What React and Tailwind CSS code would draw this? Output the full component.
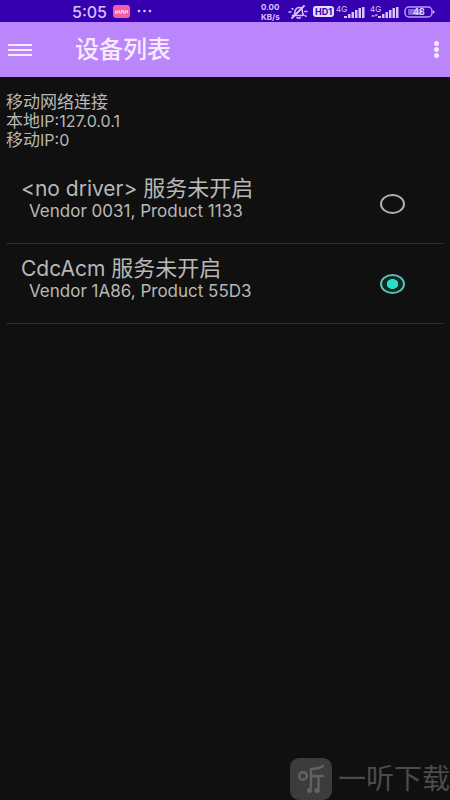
import React from "react";

const devices = [
  { id: "none", name: "<no driver>", status: "服务未开启", detail: "Vendor 0031, Product 1133" },
  { id: "cdc", name: "CdcAcm", status: "服务未开启", detail: "Vendor 1A86, Product 55D3" },
];

function MutedBell() {
  return (
    <svg viewBox="0 0 20 14" className="h-[14px] w-5" fill="none" stroke="currentColor" strokeWidth="1.5" strokeLinecap="round">
      <path d="M4.5 10.5h10M6 10c1-1 .6-2.500 1.300-4.500C8 3.500 9.500 2.500 11 2.500c2 0 3.300 1.300 3.300 3.200 0 2 .4 3.300 1.400 4.300" />
      <path d="M4 13 16 1" strokeWidth="1.8" />
      <path d="M9 12.600c1 .7 2.400.7 3.400 0M1 7h2M16.800 6.500h2.200M4 3.500l1 .8M17 10.500l1 .8" />
    </svg>
  );
}

function Signal({ sub }) {
  return (
    <svg viewBox="0 0 29 14" className="h-[14px] w-[29px]" fill="currentColor">
      <text x="0" y="7" fontSize="8" fontFamily="Inter, sans-serif">4G</text>
      {sub && <path d="M1 11.500 3 9.500v1h2v1zM8 9.500l-2 2v-1H5v-1z" />}
      <rect x="8" y="11" width="3" height="2" />
      <rect x="12" y="9" width="2.500" height="4" />
      <rect x="15.500" y="7" width="2.500" height="6" />
      <rect x="19" y="5" width="2.500" height="8" />
      <rect x="22.500" y="3" width="2.500" height="10" />
      <rect x="26" y="2" width="2.500" height="11" />
    </svg>
  );
}

function StatusBar() {
  return (
    <div className="flex h-[22px] items-center bg-[#3500b0] pr-[14px] pl-[72px] text-[#d6c4ff]">
      <span className="pt-px text-[16px] leading-[22px] font-medium">5:05</span>
      <svg viewBox="0 0 17 13" className="ml-[6px] h-[13px] w-[17px]">
        <rect width="17" height="13" rx="3" fill="#ef5fa6" />
        <path d="M2.500 5.500v2.500h2V6h2v2h2V5.500h2V8h2V6h2v2" fill="none" stroke="#ffd3e6" strokeWidth="1.100" />
      </svg>
      <svg viewBox="0 0 16 4" className="ml-[7px] h-1 w-4" fill="currentColor">
        <circle cx="2" cy="2" r="1.300" />
        <circle cx="7.500" cy="2" r="1.300" />
        <circle cx="13" cy="2" r="1.300" />
      </svg>
      <div className="ml-auto flex items-center pt-px">
        <div className="flex w-[22px] flex-col text-[8px] leading-[10px] font-bold">
          <span>0.00</span>
          <span>KB/s</span>
        </div>
        <span className="ml-[5px]"><MutedBell /></span>
        <span className="ml-[5px] flex h-[11px] w-[21px] items-center justify-center rounded-[3px] bg-[#e6dcff] text-[9px] font-bold text-[#3500b0]">HD1</span>
        <span className="ml-[2px]"><Signal /></span>
        <span className="ml-[5px]"><Signal sub /></span>
        <svg viewBox="0 0 32 12" className="ml-[5px] h-3 w-8">
          <rect x="1" y="1" width="27" height="10" rx="4" fill="none" stroke="#b69df5" strokeWidth="1.500" />
          <rect x="4" y="3" width="14" height="6" rx="1" fill="#8563dc" />
          <path d="M29 4.500c2 0 2 3 0 3z" fill="#d6c4ff" />
          <text x="15" y="9.300" textAnchor="middle" fontSize="9" fontWeight="600" fontFamily="Inter, sans-serif" fill="#e6dcff">48</text>
        </svg>
      </div>
    </div>
  );
}

export default function App() {
  const [selected, setSelected] = React.useState("cdc");
  return (
    <div className="relative min-h-screen overflow-hidden bg-[#101010] font-['Inter','Noto_Sans_CJK_SC',sans-serif] text-[#b8b8b8]">
      <StatusBar />
      <header className="flex h-[55px] items-center bg-[#bb86fc] pr-[9px] pl-2 text-[#f8eaff]">
        <button type="button" aria-label="菜单" className="flex w-6 flex-col gap-[3px]">
          <span className="h-[2px] w-full bg-current" />
          <span className="h-[2px] w-full bg-current" />
          <span className="h-[2px] w-full bg-current" />
        </button>
        <h1 className="ml-[43px] text-2xl leading-8 font-medium">设备列表</h1>
        <button type="button" aria-label="更多" className="ml-auto flex w-[10px] flex-col items-center gap-px">
          <span className="size-[5px] rounded-full bg-current" />
          <span className="size-[5px] rounded-full bg-current" />
          <span className="size-[5px] rounded-full bg-current" />
        </button>
      </header>
      <main className="px-[6px] pt-4">
        <div className="text-[17px] leading-[19px]">
          <p>移动网络连接</p>
          <p>本地<span className="text-[16px]">IP:127.0.0.1</span></p>
          <p>移动<span className="text-[16px]">IP:0</span></p>
        </div>
        <div className="mt-[14px]">
          {devices.map((d) => (
            <label key={d.id} htmlFor={d.id} className="flex h-20 items-center border-b border-[#2e2e2e] pr-[39px] pl-[15px]">
              <span className="flex-1 pb-[10px]">
                <span className="block text-[21px] leading-6">
                  {d.name} <span className="text-[22px]">{d.status}</span>
                </span>
                <span className="block pl-2 text-[17px] leading-5">{d.detail}</span>
              </span>
              <input
                id={d.id}
                type="radio"
                name="device"
                checked={selected === d.id}
                onChange={() => setSelected(d.id)}
                className="h-5 w-[25px] appearance-none rounded-[50%] border-2 border-[#b0b0b0] checked:border-[#62bdb2] checked:bg-[radial-gradient(ellipse_6px_5px_at_center,#25dfc9_95%,#0b2925_100%)]"
              />
            </label>
          ))}
        </div>
      </main>
      <div className="absolute right-0 bottom-0 flex items-center gap-[6px] text-[#4b4b4b]">
        <svg viewBox="0 0 42 42" className="size-[42px]">
          <rect width="42" height="42" rx="9" fill="#3c3c3c" />
          <g fill="none" stroke="#626262" strokeWidth="2.400" strokeLinecap="round">
            <circle cx="13" cy="18" r="3.800" />
            <path d="M33 8c-3 2-7 3-12 3v14c0 4-1 7-2 8M21 18h12M28.500 18v15" />
            <circle cx="19.500" cy="32.500" r="1.300" />
            <circle cx="27" cy="32.500" r="1.300" />
          </g>
        </svg>
        <span className="text-[28px] leading-[42px]">一听下载</span>
      </div>
    </div>
  );
}
